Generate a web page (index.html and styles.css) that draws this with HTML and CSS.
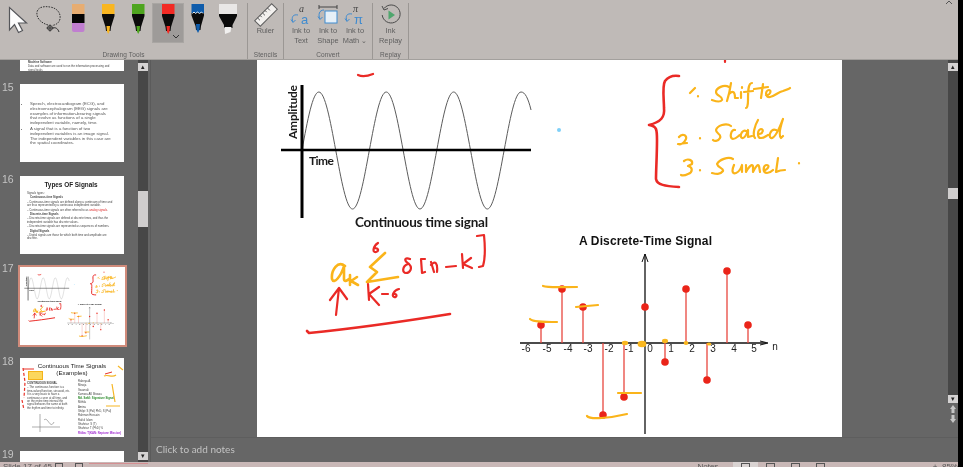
FILE: index.html
```html
<!DOCTYPE html>
<html>
<head>
    <title>Ink Tools</title>
    <link rel="stylesheet" href="styles.css">
</head>
<body>
    <svg class="defs" width="0" height="0">
        <symbol id="pen" viewBox="0 0 30 38">
            <rect x="9" y="0" width="12.5" height="10" fill="currentColor"/>
            <path d="M9 10H21.5V12L18 23L17.5 27H13L12.5 23L9 12Z" fill="#0b0b0b"/>
            <path d="M13.5 22H17L16.5 27.5L15.2 30L14 27.5Z" fill="currentColor"/>
        </symbol>
    </svg>

    <div class="app">
        <div class="ribbon">
            <div class="group group-drawing">
                <div class="tools">
                    <div class="tool">
                        <svg viewBox="0 0 30 38"><path d="M6.5 3.5V26L11.5 20.5L15.5 28.5L19.5 26.5L15.5 19H23.5Z" fill="#fdfdfd" stroke="#55565a" stroke-width="1.2"/></svg>
                    </div>
                    <div class="tool">
                        <svg viewBox="0 0 30 38"><g fill="none" stroke="#333" stroke-width="1"><path d="M15 21C8 19 3 14 4 8C5 3 11 2 17 3C24 4 28 9 27 15C26 19 23 21 19 21.5" stroke-dasharray="1.6 1.1"/><circle cx="17" cy="24" r="2.4"/><path d="M13.5 24H20.5M17 20.5V27.5M20 24C23 23 25 25 26 28"/></g></svg>
                    </div>
                    <div class="tool">
                        <svg viewBox="0 0 30 38"><rect x="9" y="0" width="12.5" height="10" fill="#e7ad72"/><rect x="9" y="10" width="12.5" height="9" fill="#050505"/><path d="M9 19H21.5V26Q21.5 28 19.5 28H11Q9 28 9 26Z" fill="#c07ed0"/></svg>
                    </div>
                    <div class="tool"><svg class="pen-yellow"><use href="#pen"/></svg></div>
                    <div class="tool"><svg class="pen-green"><use href="#pen"/></svg></div>
                    <div class="tool tool-on">
                        <svg class="pen-red"><use href="#pen"/></svg>
                        <svg class="caret" viewBox="0 0 8 5"><path d="M1 1L4 4L7 1" fill="none" stroke="#333" stroke-width="1"/></svg>
                    </div>
                    <div class="tool">
                        <svg viewBox="0 0 30 38"><rect x="8.5" y="0" width="12.5" height="9" fill="#0f5cab"/><path d="M8.5 9H21V11.5L18 22L17.5 26H13L12.5 22L8.5 11.5Z" fill="#0b0b0b"/><path d="M9.5 9.5L11 8L12.5 9.5L14.5 8L16.5 9.5L18.5 8L20 9.5" fill="none" stroke="#e8e8e8" stroke-width="1"/><path d="M13 20H17L16.5 26L15 29L13.5 26Z" fill="#0f5cab"/></svg>
                    </div>
                    <div class="tool">
                        <svg viewBox="0 0 30 38"><rect x="6" y="0" width="18" height="10" fill="#e9e7e6"/><path d="M6 10H24V12L19.5 21V24H11V21L6 12Z" fill="#0b0b0b"/><path d="M11.5 23H18.5L17.5 28L12 30Z" fill="#f1f0ef"/></svg>
                    </div>
                </div>
                <div class="group-label">Drawing Tools</div>
            </div>

            <div class="group group-stencils">
                <div class="buttons">
                    <div class="btn btn-wide">
                        <svg viewBox="0 0 24 22"><g transform="rotate(-45 12 11)"><rect x="0" y="7" width="24" height="8" fill="#f2f0ee" stroke="#5f5f5f"/><path d="M4 7V10.5M7.5 7V9.5M11 7V10.5M14.5 7V9.5M18 7V10.5" stroke="#555" stroke-width=".9"/></g></svg>
                        <span>Ruler</span>
                    </div>
                </div>
                <div class="group-label">Stencils</div>
            </div>

            <div class="group group-convert">
                <div class="buttons">
                    <div class="btn">
                        <svg viewBox="0 0 24 22">
                            <text x="10" y="8" class="glyph-dark">a</text>
                            <text x="12" y="20" class="glyph-blue">a</text>
                            <path d="M9 11C4 10 2 13 4 18M2 15.5L4 18.5L6.5 16" fill="none" stroke="#3f8bd0" stroke-width="1"/>
                        </svg>
                        <span>Ink to<br>Text</span>
                    </div>
                    <div class="btn">
                        <svg viewBox="0 0 24 22">
                            <path d="M3 3H21M3 1V5M21 1V5" stroke="#444" stroke-width="1"/>
                            <rect x="9" y="7" width="12" height="12" fill="#e6f0f8" stroke="#3f8bd0"/>
                            <path d="M8 6C3 6 2 11 4 15M2 12.5L4 15.5L6.5 13" fill="none" stroke="#3f8bd0" stroke-width="1"/>
                        </svg>
                        <span>Ink to<br>Shape</span>
                    </div>
                    <div class="btn">
                        <svg viewBox="0 0 24 22">
                            <text x="10" y="8" class="glyph-dark">π</text>
                            <text x="11" y="20" class="glyph-blue">π</text>
                            <path d="M9 10C4 9 2 12 4 17M2 14.5L4 17.5L6.5 15" fill="none" stroke="#3f8bd0" stroke-width="1"/>
                        </svg>
                        <span>Ink to<br>Math ⌄</span>
                    </div>
                </div>
                <div class="group-label">Convert</div>
            </div>

            <div class="group group-replay">
                <div class="buttons">
                    <div class="btn btn-wide">
                        <svg viewBox="0 0 24 22">
                            <path d="M5 4.5A9 9 0 1 1 3.2 11" fill="none" stroke="#4a4a4a" stroke-width="1"/>
                            <path d="M3 2L5 6L9 4.5" fill="none" stroke="#4a4a4a" stroke-width="1"/>
                            <path d="M9.5 6.5L16 11L9.5 15.5Z" fill="#4fa66d"/>
                        </svg>
                        <span>Ink<br>Replay</span>
                    </div>
                </div>
                <div class="group-label">Replay</div>
            </div>

            <svg class="collapse" viewBox="0 0 8 5"><path d="M1 4L4 1L7 4" fill="none" stroke="#555" stroke-width="1"/></svg>
        </div>

        <div class="workspace">
            <div class="sidebar">
                <div class="thumbs">
                    <div class="thumb-row">
                        <span class="num"></span>
                        <div class="thumb thumb-cut">
                            <p class="tiny"><b>Machine Software</b></p>
                            <p class="tiny">Data and software are used to run the information processing and signal tasks</p>
                        </div>
                    </div>
                    <div class="thumb-row">
                        <span class="num">15</span>
                        <div class="thumb thumb-text">
                            <ul>
                                <li>Speech, electrocardiogram (ECG), and electroencephalogram (EEG) signals are examples of information-bearing signals that evolve as functions of a single independent variable, namely, time.</li>
                                <li>A signal that is a function of two independent variables is an image signal. The independent variables in this case are the spatial coordinates.</li>
                            </ul>
                        </div>
                    </div>
                    <div class="thumb-row">
                        <span class="num">16</span>
                        <div class="thumb thumb-types">
                            <h4>Types OF Signals</h4>
                            <p class="tiny">Signals types:</p>
                            <p class="tiny head">Continuous-time Signals</p>
                            <p class="tiny">– Continuous-time signals are defined along a continuum of time and are thus represented by a continuous independent variable.</p>
                            <p class="tiny">– Continuous-time signals are often referred to as <span class="red-text">analog signals</span>.</p>
                            <p class="tiny head">Discrete-time Signals</p>
                            <p class="tiny">– Discrete-time signals are defined at discrete times, and thus the independent variable has discrete values.</p>
                            <p class="tiny">– Discrete-time signals are represented as sequences of numbers.</p>
                            <p class="tiny head">Digital Signals</p>
                            <p class="tiny">– Digital signals are those for which both time and amplitude are discrete.</p>
                        </div>
                    </div>
                    <div class="thumb-row">
                        <span class="num">17</span>
                        <div class="thumb thumb-on">
                            <svg viewBox="257 32 585 433" preserveAspectRatio="none"><use href="#slide17"/></svg>
                        </div>
                    </div>
                    <div class="thumb-row">
                        <span class="num">18</span>
                        <div class="thumb thumb-examples">
                            <h4>Continuous Time Signals (Examples)</h4>
                            <div class="ex-cols">
                                <div class="ex-left">
                                    <div class="ex-box"></div>
                                    <p class="tiny"><b>CONTINUOUS SIGNAL</b></p>
                                    <p class="tiny">– The continuous function is a time-valued function, sinusoid, etc. It is a very basic to have a continuous curve at all time, and on the entire time interval the signal behaves the same at both the rhythm and time to infinity.</p>
                                </div>
                                <div class="ex-right">
                                    <p class="tiny">Rabeya A.</p>
                                    <p class="tiny">Minoja</p>
                                    <p class="tiny">Swarnali</p>
                                    <p class="tiny">Kumara AK Biswas</p>
                                    <p class="tiny green-text">Md. Sakil: Signature Signal</p>
                                    <p class="tiny">Mithila</p>
                                    <p class="tiny">Amina</p>
                                    <p class="tiny">Shilpi: S (Pal) PhD, S (Pal)</p>
                                    <p class="tiny">Rahman Hossain</p>
                                    <p class="tiny">Rafiul Islam</p>
                                    <p class="tiny">Shahriar: S (T)</p>
                                    <p class="tiny">Shahriar: T (PhD) %</p>
                                    <p class="tiny purple-text">Ritika: T(KAN: Neptune Mission)</p>
                                </div>
                            </div>
                            <svg class="thumb-ink" viewBox="0 0 104 79">
                                <path d="M3 10L5 24L4 40M2 42L4 52" fill="none" stroke="#e83228" stroke-width="1.2" stroke-dasharray="3 2"/>
                                <path d="M84 18C88 16 92 20 96 17M92 26L95 44M98 8L103 12M86 48H100" fill="none" stroke="#f6b624" stroke-width="1.2"/>
                                <path d="M85 16L92 14M3 11H14" fill="none" stroke="#e83228" stroke-width="1"/>
                                <path d="M20 56V74M12 69H40M24 62C28 58 30 72 34 64" fill="none" stroke="#777" stroke-width=".6"/>
                            </svg>
                        </div>
                    </div>
                    <div class="thumb-row">
                        <span class="num">19</span>
                        <div class="thumb"></div>
                    </div>
                </div>
                <div class="vscroll vscroll-side">
                    <div class="scroll-btn">▴</div>
                    <div class="scroll-thumb"></div>
                    <div class="scroll-btn scroll-end">▾</div>
                </div>
            </div>

            <div class="editor">
                <div class="stage">
                    <div class="slide">
                        <svg viewBox="257 60 585 377" width="585" height="377">
                            <g id="slide17">
                                <rect x="257" y="30" width="585" height="440" fill="#fff"/>
                                <path class="wave" d="M302 150c5.5-29.7 10.75-58 16.85-58c6.1 0 11.35 28.3 16.85 58c5.5 29.7 10.75 59 16.85 59c6.1 0 11.35-29.3 16.85-59c5.5-29.7 10.75-58 16.85-58c6.1 0 11.35 28.3 16.85 58c5.5 29.7 10.75 59 16.85 59c6.1 0 11.35-29.3 16.85-59c5.5-29.7 10.75-58 16.85-58c6.1 0 11.35 28.3 16.85 58c5.5 29.7 10.75 59 16.85 59c6.1 0 11.35-29.3 16.85-59c5.5-29.7 10.75-58 16.85-58c4 0 7 6 10 18"/>
                                <path d="M281 150H531" stroke="#000" stroke-width="2.4"/>
                                <path d="M302 85V218" stroke="#000" stroke-width="3"/>
                                <text class="label-bold" transform="translate(297 139) rotate(-90)" textLength="54">Amplitude</text>
                                <text class="label-bold" x="309" y="165" textLength="25">Time</text>
                                <text class="label-title" x="355" y="227" textLength="133">Continuous time signal</text>

                                <text class="label-discrete" x="579" y="245" textLength="133">A Discrete-Time Signal</text>
                                <path class="axes" d="M520 343H766M645 254V434"/>
                                <path d="M642 262L645 254L648 262M760 341L768 343L760 345" fill="none" stroke="#111" stroke-width="1"/>
                                <g class="ticks">
                                    <text x="526" y="352">-6</text><text x="547" y="352">-5</text><text x="568" y="352">-4</text>
                                    <text x="588" y="352">-3</text><text x="609" y="352">-2</text><text x="629" y="352">-1</text>
                                    <text x="650" y="352">0</text><text x="671" y="352">1</text><text x="692" y="352">2</text>
                                    <text x="713" y="352">3</text><text x="734" y="352">4</text><text x="754" y="352">5</text>
                                    <text x="775" y="350">n</text>
                                </g>
                                <path class="stems" d="M541 343V325M562 343V289M583 343V307M603 343V415M624 343V397M665 343V362M686 343V289M707 343V380M727 343V271M748 343V325"/>
                                <g fill="#ea2419">
                                    <circle cx="541" cy="325" r="3.8"/><circle cx="562" cy="289" r="3.8"/><circle cx="583" cy="307" r="3.8"/>
                                    <circle cx="603" cy="415" r="3.8"/><circle cx="624" cy="397" r="3.8"/><circle cx="645" cy="307" r="3.8"/>
                                    <circle cx="665" cy="362" r="3.8"/><circle cx="686" cy="289" r="3.8"/><circle cx="707" cy="380" r="3.8"/>
                                    <circle cx="727" cy="271" r="3.8"/><circle cx="748" cy="325" r="3.8"/>
                                </g>
                                <g fill="#fab71e">
                                    <ellipse cx="625" cy="343" rx="3.2" ry="2.2"/><ellipse cx="642" cy="344" rx="4.4" ry="3.2"/>
                                    <ellipse cx="665" cy="341" rx="3" ry="2.2"/><ellipse cx="686" cy="343" rx="2.4" ry="2"/><ellipse cx="709" cy="344" rx="2.4" ry="1.6"/>
                                </g>
                                <path class="ink-yellow" d="M530 319C533 322 545 322 557 322M543 286C548 288 560 287 577 287M576 307L598 305M618 393L641 393M587 416C590 420 610 418 627 414"/>

                                <path class="ink-red" d="M358 75C362 77 368 76 373 74M725 60L725 62"/>
                                <path class="ink-red heavy" d="M679 76C672 75 668 77 665 81C662 86 664 100 664 108C665 117 661 122 649 125C657 126 657 130 657 140C657 155 656 170 656 179C657 185 665 186 679 187"/>

                                <!-- handwritten notes -->
                                <path class="ink-yellow" d="M690 93L695 88M698 96V96.4M729 87C724 84 716 88 716 92C716 96 723 96 722 100C720 103 715 101 712 100M731 83C730 90 729 95 727 101M729 94C733 90 735 92 735 98L738 98M741 92L741 98M742 87L742 88M752 83C748 83 748 92 748 100C748 106 747 108 746 108M744 92L753 91M763 84L761 98M754 89L768 87M766 95C770 96 772 90 769 90C765 90 765 98 770 97C775 96 778 92 783 91C786 90 789 89 790 88"/>
                                <path class="ink-yellow" d="M679 137C682 133 687 135 686 139C684 143 681 145 678 144L687 143M700 138V138.4M731 126C726 122 717 126 716 130C716 134 722 134 720 138C718 142 714 141 713 140M735 130C731 129 729 138 733 139C736 139 738 136 740 135M746 131C742 129 739 137 742 138C745 139 747 133 748 130L748 137L752 136M758 120C755 125 752 135 755 138M759 134C763 134 764 129 761 129C757 130 757 138 761 138C764 138 766 136 768 135M776 130C771 128 768 136 771 138C774 139 778 132 783 119C781 125 778 135 781 138L783 136"/>
                                <path class="ink-yellow" d="M684 161C688 158 693 160 692 164L688 166C693 167 693 172 688 174C686 175 683 176 681 175M700 170V170.4M733 159C728 156 719 160 717 164C718 168 724 168 723 171C720 175 716 174 712 173M734 165C731 172 733 174 736 173C739 172 741 168 742 165L742 172M746 165V172C748 168 752 163 753 166L753 172C755 168 758 163 759 166L760 172M764 170C768 170 770 165 767 165C763 165 762 173 767 173C770 173 772 171 773 170M778 158L776 172C780 170 785 170 785 170M799 163V163.4"/>
                                <circle cx="559" cy="130" r="2" fill="#7fd0f8"/>

                                <!-- formula -->
                                <path class="ink-yellow heavy" d="M345 266C338 260 331 270 332 279C334 285 341 276 344 266L344 279C344 282 347 281 349 279M350 275L350 285M357 277L351 281L358 285M385 253L370 267L377 272L367 282L398 277"/>
                                <path class="ink-red" d="M378 243C373 246 372 253 376 252C379 251 379 248 374 248M410 259C405 257 403 260 409 264C413 268 410 273 406 273C402 273 402 266 408 264M425 259L421 259L422 273L425 272M431 262L434 272M431 265C435 260 438 263 437 272M446 267L456 266M462 254L463 268M471 258L463 264L472 268M477 236L484 235C485 245 486 256 483 266L479 267M368 284L369 300M379 287L369 294L379 305M382 294L388 294M399 289C394 290 391 296 394 297C397 298 398 293 393 294M336 315L339 288M330 300L339 288L347 299"/>
                                <path class="ink-red heavy" d="M307 331L309 333C350 329 400 322 450 314"/>
                            </g>
                        </svg>
                    </div>
                    <div class="vscroll-main">
                        <div class="vscroll">
                            <div class="scroll-btn">▴</div>
                            <div class="scroll-thumb"></div>
                            <div class="scroll-btn scroll-end">▾</div>
                        </div>
                        <div class="slide-nav">
                            <svg viewBox="0 0 8 18"><path d="M4 0L7 4H5.5V8H2.5V4H1ZM2.5 10H5.5V14H7L4 18L1 14H2.5Z" fill="#c6c6c6"/></svg>
                        </div>
                    </div>
                </div>
                <div class="notes">Click to add notes</div>
            </div>
        </div>

        <div class="status">
            <span class="st-count">Slide 17 of 45</span>
            <span class="st-box"></span>
            <span class="st-box st-person"></span>
            <span class="st-line"></span>
            <span class="st-notes">Notes</span>
            <span class="st-view st-view-on"><i></i></span>
            <span class="st-view"><i></i></span>
            <span class="st-view"><i></i></span>
            <span class="st-view"><i></i></span>
            <span class="st-zoom">+&nbsp;&nbsp;85%</span>
        </div>
    </div>
</body>
</html>
```

FILE: styles.css
```css
* {
    box-sizing: border-box;
}

body {
    margin: 0;
    width: 963px;
    height: 467px;
    overflow: hidden;
    background-color: #000;
    font-family: "Liberation Sans", Arial, sans-serif;
}

p, ul, h4 {
    margin: 0;
    padding: 0;
}

.defs {
    position: absolute;
}

.app {
    width: 958px;
    height: 467px;
    display: flex;
    flex-direction: column;
    overflow: hidden;
    filter: blur(0.45px);
}

/* ribbon */
.ribbon {
    position: relative;
    height: 60px;
    flex: none;
    display: flex;
    background-color: #bfbab7;
    color: #5e5e5e;
    padding-top: 3px;
    border-bottom: 1px solid #a3a09d;
}

.group {
    display: flex;
    flex-direction: column;
    height: 56px;
    border-right: 1px solid #9b9794;
}

.group-drawing { width: 248px; }
.group-stencils { width: 36px; }
.group-convert { width: 89px; }
.group-replay { width: 36px; }

.group-label {
    margin-top: auto;
    text-align: center;
    font-size: 6.5px;
    line-height: 8px;
    letter-spacing: 0.1px;
}

.tools {
    display: flex;
    padding: 1px 0 0 3px;
}

.tool {
    position: relative;
    width: 30px;
    height: 38px;
}

.tool svg {
    display: block;
    width: 30px;
    height: 38px;
}

.tool-on {
    background-color: #9e9b99;
    box-shadow: 0 0 0 1px #a9a6a3;
}

.tool svg.caret {
    position: absolute;
    right: 3px;
    bottom: 3px;
    width: 8px;
    height: 5px;
}

.pen-yellow { color: #f9b621; }
.pen-green { color: #4ea51f; }
.pen-red { color: #f22a24; }

.buttons {
    display: flex;
    justify-content: center;
    padding-top: 1px;
}

.btn {
    width: 27px;
    text-align: center;
    font-size: 7.4px;
    line-height: 10px;
    white-space: nowrap;
}

.btn-wide {
    width: 35px;
}

.btn svg {
    display: block;
    width: 24px;
    height: 22px;
    margin: 0 auto;
    overflow: visible;
}

.btn span {
    display: block;
}

.glyph-dark {
    font-family: "Liberation Serif", serif;
    font-style: italic;
    font-size: 10px;
    fill: #444;
}

.glyph-blue {
    font-family: "Liberation Sans", sans-serif;
    font-size: 13px;
    fill: #3f8bd0;
}

.collapse {
    position: absolute;
    top: 0;
    left: 945px;
    width: 8px;
    height: 5px;
}

/* main area */
.workspace {
    flex: 1;
    display: flex;
    min-height: 0;
    background-color: #666;
}

.sidebar {
    width: 151px;
    flex: none;
    display: flex;
    border-right: 1px solid #5b5b5b;
}

.thumbs {
    width: 138px;
    height: 402px;
    flex: none;
    display: grid;
    grid-template-rows: 24px 92px 89px 93px 93px 1fr;
    overflow: hidden;
}

.thumb-row {
    display: flex;
    align-items: flex-start;
    min-height: 0;
    padding-left: 20px;
    position: relative;
}

.num {
    position: absolute;
    left: 2px;
    top: -3px;
    color: #c4c4c4;
    font-size: 10.5px;
    line-height: 12px;
}

.thumb {
    position: relative;
    width: 104px;
    height: 78px;
    background-color: #fff;
    overflow: hidden;
    color: #444;
}

.thumb-cut {
    height: 11px;
    padding: 1px 8px;
}

.thumb-text {
    padding: 18px 12px 0 6px;
}

.thumb-text ul {
    list-style: disc;
    font-size: 4.3px;
    line-height: 4.8px;
    padding-left: 4px;
    color: #555;
}

.thumb-text li {
    margin-bottom: 1px;
}

.tiny {
    font-size: 2.8px;
    line-height: 3.4px;
    margin-bottom: 1px;
}

.head {
    font-weight: bold;
    padding-left: 3px;
}

.red-text { color: #d22; }
.green-text { color: #2a8a2a; font-weight: bold; }
.purple-text { color: #a02bd0; font-weight: bold; }

.thumb-types {
    padding: 5px 9px 0 7px;
}

.thumb-types h4,
.thumb-examples h4 {
    text-align: center;
    color: #222;
    font-size: 6.4px;
    line-height: 7px;
}

.thumb-types h4 {
    margin-bottom: 4px;
}

.thumb-on {
    left: -2px;
    width: 109px;
    height: 82px;
    border: 2px solid #d08b7b;
    --ink-light: 4.5px;
    --ink-heavy: 5.5px;
}

.thumb-on svg {
    display: block;
    width: 105px;
    height: 78px;
}

.thumb-examples {
    height: 79px;
    padding-top: 4px;
}

.thumb-examples h4 {
    font-weight: normal;
    font-size: 6.2px;
    padding: 0 14px;
}

.ex-cols {
    display: grid;
    grid-template-columns: 50px 1fr;
    gap: 2px;
    margin-top: 1px;
}

.ex-left {
    padding-left: 7px;
}

.ex-box {
    width: 15px;
    height: 9px;
    background-color: #fbd75d;
    border: 1px solid #f4b31a;
    margin: -6px 0 2px 1px;
}

.ex-right {
    padding: 3px 0 0 6px;
    white-space: nowrap;
}

.ex-right .tiny {
    line-height: 3.2px;
    margin-bottom: 1.1px;
}

.thumb-ink {
    position: absolute;
    left: 0;
    top: 0;
    width: 104px;
    height: 79px;
}

/* scrollbars */
.vscroll {
    width: 10px;
    background-color: #474747;
    display: flex;
    flex-direction: column;
    padding-top: 3px;
}

.vscroll-side {
    height: 402px;
    flex: none;
}

.scroll-btn {
    flex: none;
    width: 10px;
    height: 8px;
    background-color: #d4d2d2;
    color: #222;
    font-size: 7px;
    line-height: 8px;
    text-align: center;
    overflow: hidden;
}

.scroll-thumb {
    width: 10px;
    background-color: #d0cece;
}

.vscroll-side .scroll-thumb {
    height: 36px;
    margin-top: 120px;
}

.vscroll-side .scroll-end {
    margin: auto 0 2px;
}

.vscroll-main {
    width: 10px;
    flex: none;
    margin-left: auto;
}

.vscroll-main .vscroll {
    height: 343px;
}

.vscroll-main .scroll-thumb {
    height: 11px;
    margin-top: 117px;
}

.vscroll-main .scroll-end {
    margin-top: auto;
}

.slide-nav svg {
    display: block;
    width: 8px;
    height: 18px;
    margin: 2px 0 0 1px;
}

/* slide and notes */
.editor {
    flex: 1;
    display: flex;
    flex-direction: column;
    min-width: 0;
}

.stage {
    height: 377px;
    flex: none;
    display: flex;
}

.slide {
    width: 585px;
    height: 377px;
    margin-left: 106px;
    background-color: #fff;
    overflow: hidden;
    flex: none;
}

.slide svg {
    display: block;
}

.notes {
    flex: 1;
    border-top: 1px solid #5e5e5e;
    padding: 5px 0 0 5px;
    color: #c2c2c2;
    font-family: Lato, sans-serif;
    font-size: 10px;
    line-height: 13px;
}

/* slide drawing */
.wave {
    fill: none;
    stroke: #5c5c5c;
    stroke-width: 1;
}

.axes {
    stroke: #111;
    stroke-width: 1.3;
    fill: none;
}

.label-bold,
.label-title {
    font-family: Lato, sans-serif;
    font-weight: bold;
    font-size: 12px;
    fill: #1a1a1a;
}

.label-title {
    font-size: 13.5px;
}

.label-discrete {
    font-family: "Liberation Sans", sans-serif;
    font-weight: bold;
    font-size: 12px;
    fill: #111;
}

.ticks {
    font-size: 10px;
    fill: #222;
    text-anchor: middle;
}

.stems {
    fill: none;
    stroke: #e8483f;
    stroke-width: 1.3;
}

.ink-yellow,
.ink-red {
    fill: none;
    stroke-linecap: round;
    stroke-linejoin: round;
    stroke-width: var(--ink-light, 2.2px);
}

.ink-yellow {
    stroke: #fab41a;
}

.ink-red {
    stroke: #ea2a26;
}

.ink-yellow.heavy,
.ink-red.heavy {
    stroke-width: var(--ink-heavy, 2.6px);
}

/* status bar */
.status {
    height: 5px;
    flex: none;
    display: flex;
    align-items: flex-start;
    background-color: #c9b8b7;
    color: #555;
    font-size: 8px;
    line-height: 10px;
    overflow: hidden;
    white-space: nowrap;
}

.st-count {
    margin-left: 3px;
    width: 52px;
}

.st-box {
    width: 8px;
    height: 5px;
    margin-top: 1px;
    border: 1px solid #555;
}

.st-person {
    margin-left: 12px;
}

.st-line {
    width: 60px;
    height: 1px;
    margin: 1px 0 0 6px;
    background-color: #d48f92;
}

.st-notes {
    margin-left: 549px;
    width: 36px;
}

.st-view {
    width: 25px;
    height: 5px;
    display: flex;
    justify-content: center;
}

.st-view i {
    width: 9px;
    height: 5px;
    margin-top: 1px;
    border: 1px solid #555;
}

.st-view-on {
    background-color: #d9d3d2;
}

.st-zoom {
    margin-left: 100px;
}
```
